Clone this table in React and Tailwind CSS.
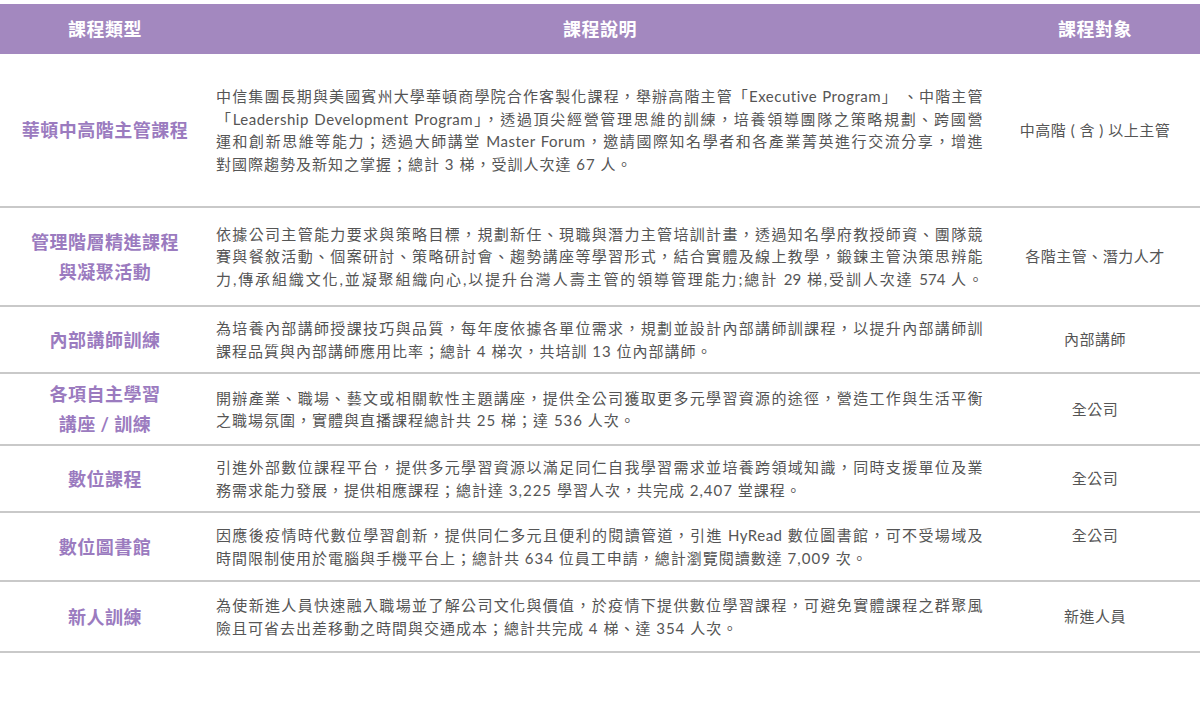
import React from "react";

const rows = [
  {
    h: "h-[154px]",
    label: ["華頓中高階主管課程"],
    lines: [
      "中信集團長期與美國賓州大學華頓商學院合作客製化課程，舉辦高階主管「Executive Program」 、中階主管",
      "「Leadership Development Program」，透過頂尖經營管理思維的訓練，培養領導團隊之策略規劃、跨國營",
      "運和創新思維等能力；透過大師講堂 Master Forum，邀請國際知名學者和各產業菁英進行交流分享，增進",
      "對國際趨勢及新知之掌握；總計 3 梯，受訓人次達 67 人。",
    ],
    target: "中高階 ( 含 ) 以上主管",
  },
  {
    h: "h-[99px]",
    label: ["管理階層精進課程", "與凝聚活動"],
    lines: [
      "依據公司主管能力要求與策略目標，規劃新任、現職與潛力主管培訓計畫，透過知名學府教授師資、團隊競",
      "賽與餐敘活動、個案研討、策略研討會、趨勢講座等學習形式，結合實體及線上教學，鍛鍊主管決策思辨能",
      "力,傳承組織文化,並凝聚組織向心,以提升台灣人壽主管的領導管理能力;總計 29 梯,受訓人次達 574 人。",
    ],
    justifyLast: true,
    target: "各階主管、潛力人才",
  },
  {
    h: "h-[67px]",
    label: ["內部講師訓練"],
    lines: [
      "為培養內部講師授課技巧與品質，每年度依據各單位需求，規劃並設計內部講師訓課程，以提升內部講師訓",
      "課程品質與內部講師應用比率；總計 4 梯次，共培訓 13 位內部講師。",
    ],
    target: "內部講師",
  },
  {
    h: "h-[72px]",
    label: ["各項自主學習", "講座 / 訓練"],
    lines: [
      "開辦產業、職場、藝文或相關軟性主題講座，提供全公司獲取更多元學習資源的途徑，營造工作與生活平衡",
      "之職場氛圍，實體與直播課程總計共 25 梯；達 536 人次。",
    ],
    target: "全公司",
  },
  {
    h: "h-[67px]",
    label: ["數位課程"],
    lines: [
      "引進外部數位課程平台，提供多元學習資源以滿足同仁自我學習需求並培養跨領域知識，同時支援單位及業",
      "務需求能力發展，提供相應課程；總計達 3,225 學習人次，共完成 2,407 堂課程。",
    ],
    target: "全公司",
  },
  {
    h: "h-[69px]",
    label: ["數位圖書館"],
    lines: [
      "因應後疫情時代數位學習創新，提供同仁多元且便利的閱讀管道，引進 HyRead 數位圖書館，可不受場域及",
      "時間限制使用於電腦與手機平台上；總計共 634 位員工申請，總計瀏覽閱讀數達 7,009 次。",
    ],
    target: "全公司",
    targetTop: true,
  },
  {
    h: "h-[71px]",
    label: ["新人訓練"],
    lines: [
      "為使新進人員快速融入職場並了解公司文化與價值，於疫情下提供數位學習課程，可避免實體課程之群聚風",
      "險且可省去出差移動之時間與交通成本；總計共完成 4 梯、達 354 人次。",
    ],
    target: "新進人員",
  },
];

export default function App() {
  return (
    <div
      className="w-[1200px] h-[706px] bg-white pt-[4px]"
      style={{ fontFamily: 'Lato, "Noto Sans CJK TC", sans-serif' }}
    >
      <div className="grid grid-cols-[210px_780px_210px] h-[50px] bg-[#a388bf] text-white font-bold text-[18px] tracking-[0.5px]">
        <div className="flex items-center justify-center">課程類型</div>
        <div className="flex items-center justify-center">課程說明</div>
        <div className="flex items-center justify-center">課程對象</div>
      </div>
      {rows.map((r, i) => (
        <div
          key={i}
          className={`grid grid-cols-[210px_780px_210px] border-b-2 border-[#c9c9c9] ${r.h}`}
        >
          <div className="flex flex-col items-center justify-center text-[#9b7bbf] font-bold text-[18px] leading-[30px] tracking-[0.5px]">
            {r.label.map((l, j) => (
              <div key={j}>{l}</div>
            ))}
          </div>
          <div className="flex flex-col justify-center pl-[6px] pr-[7px] text-[#555555] text-[15px] leading-[22.5px]">
            {r.lines.map((l, j) => {
              const isLast = j === r.lines.length - 1;
              if (isLast && r.justifyLast) {
                return (
                  <div key={j} className="text-justify [text-align-last:justify] tracking-[0px]">
                    {l}
                  </div>
                );
              }
              return (
                <div
                  key={j}
                  className={
                    isLast
                      ? "text-left tracking-[1px]"
                      : "text-justify [text-align-last:justify] tracking-[0.5px]"
                  }
                >
                  {l}
                </div>
              );
            })}
          </div>
          <div
            className={`flex items-center justify-center text-[#555555] text-[15px] tracking-[0.5px] ${
              r.targetTop ? "pb-[22px]" : ""
            }`}
          >
            {r.target}
          </div>
        </div>
      ))}
    </div>
  );
}
